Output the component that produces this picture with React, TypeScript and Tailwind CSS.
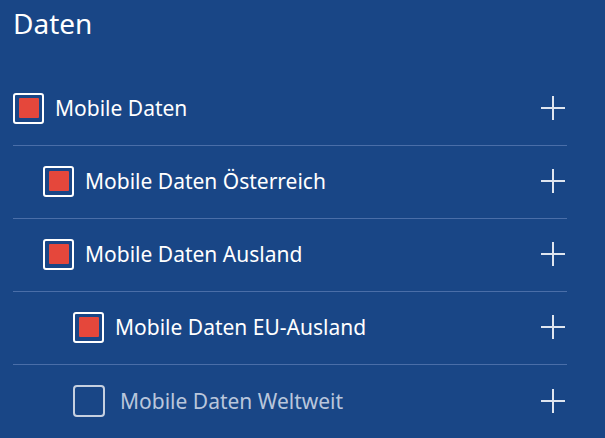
import React from "react";

type Row = { label: string; pad: string; checked: boolean; muted?: boolean };

const rows: Row[] = [
  { label: "Mobile Daten", pad: "pl-0", checked: true },
  { label: "Mobile Daten Österreich", pad: "pl-[30px]", checked: true },
  { label: "Mobile Daten Ausland", pad: "pl-[30px]", checked: true },
  { label: "Mobile Daten EU-Ausland", pad: "pl-[60px]", checked: true },
  { label: "Mobile Daten Weltweit", pad: "pl-[60px]", checked: false, muted: true },
];

function Plus() {
  return (
    <svg width="24" height="24" viewBox="0 0 24 24" className="shrink-0">
      <path d="M0 12H24M12 0V24" stroke="#dfe5ef" strokeWidth="2" fill="none" />
    </svg>
  );
}

export default function App() {
  return (
    <div
      className="w-[605px] h-[438px] overflow-hidden bg-[#194686] text-white"
      style={{ fontFamily: '"Noto Sans", "Open Sans", sans-serif' }}
    >
      <div className="h-[73px] pl-[13px] pt-[3px] text-[28px] leading-[40px]">Daten</div>
      <div className="flex flex-col">
        {rows.map((r, i) => (
          <div
            key={r.label}
            className={`h-[73px] ml-[13px] mr-[38px] pb-[2px] flex items-center ${
              i < rows.length - 1 ? "border-b border-[#4a6ea8]" : ""
            }`}
          >
            <div className={`flex-1 flex items-center ${r.pad}`}>
              {r.checked ? (
                <div className="w-[31px] h-[31px] rounded-[3px] border-2 border-white flex items-center justify-center">
                  <div className="w-[20px] h-[20px] bg-[#e5473b] rounded-[1px]" />
                </div>
              ) : (
                <div className="w-[32px] h-[32px] rounded-[4px] border-2 border-[#c6d0e0]" />
              )}
              <span
                className={`text-[21px] leading-[28px] ${
                  r.muted ? "ml-[15px] text-[#b9c6dc]" : "ml-[11px] text-white"
                }`}
              >
                {r.label}
              </span>
            </div>
            <div className="pr-[2px]">
              <Plus />
            </div>
          </div>
        ))}
      </div>
    </div>
  );
}
